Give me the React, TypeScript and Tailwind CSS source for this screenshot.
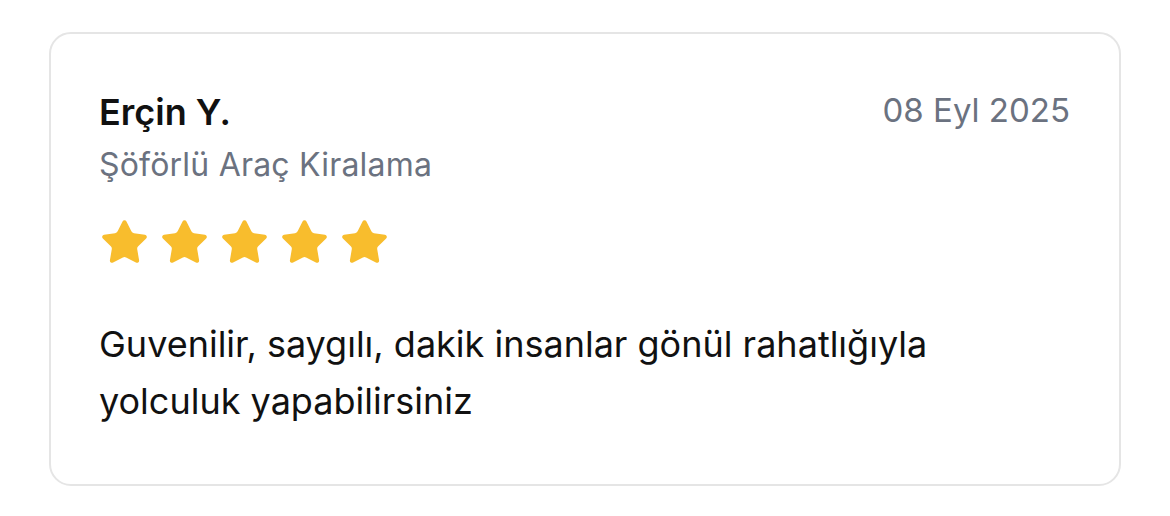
import { Star } from "lucide-react"

export default function App() {
  return (
    <div className="min-h-[516px] bg-white px-[49px] pt-[32px] font-['Inter',sans-serif]">
      <div className="rounded-[22px] border-2 border-[#e5e5e5] pl-[48px] pr-[49px] pt-[56px] pb-[54px]">
        <div className="flex items-start justify-between">
          <div className="text-[36px] font-semibold leading-[44px] text-[#111111]">Erçin Y.</div>
          <div className="-mt-[2px] text-[33px] leading-[44px] text-[#6b7280]">08 Eyl 2025</div>
        </div>
        <div className="mt-[11px] text-[32px] leading-[40px] tracking-[0.2px] text-[#6b7280]">Şöförlü Araç Kiralama</div>
        <div className="mt-[32px] flex gap-[9px]">
          {[0, 1, 2, 3, 4].map((i) => (
            <Star
              key={i}
              className="h-[51px] w-[51px] fill-[#f8bd2d] text-[#f8bd2d]"
              strokeWidth={1}
            />
          ))}
        </div>
        <p className="mt-[48px] max-w-[880px] text-[36px] leading-[57px] text-[#111111]">
          Guvenilir, saygılı, dakik insanlar gönül rahatlığıyla yolculuk yapabilirsiniz
        </p>
      </div>
    </div>
  )
}
